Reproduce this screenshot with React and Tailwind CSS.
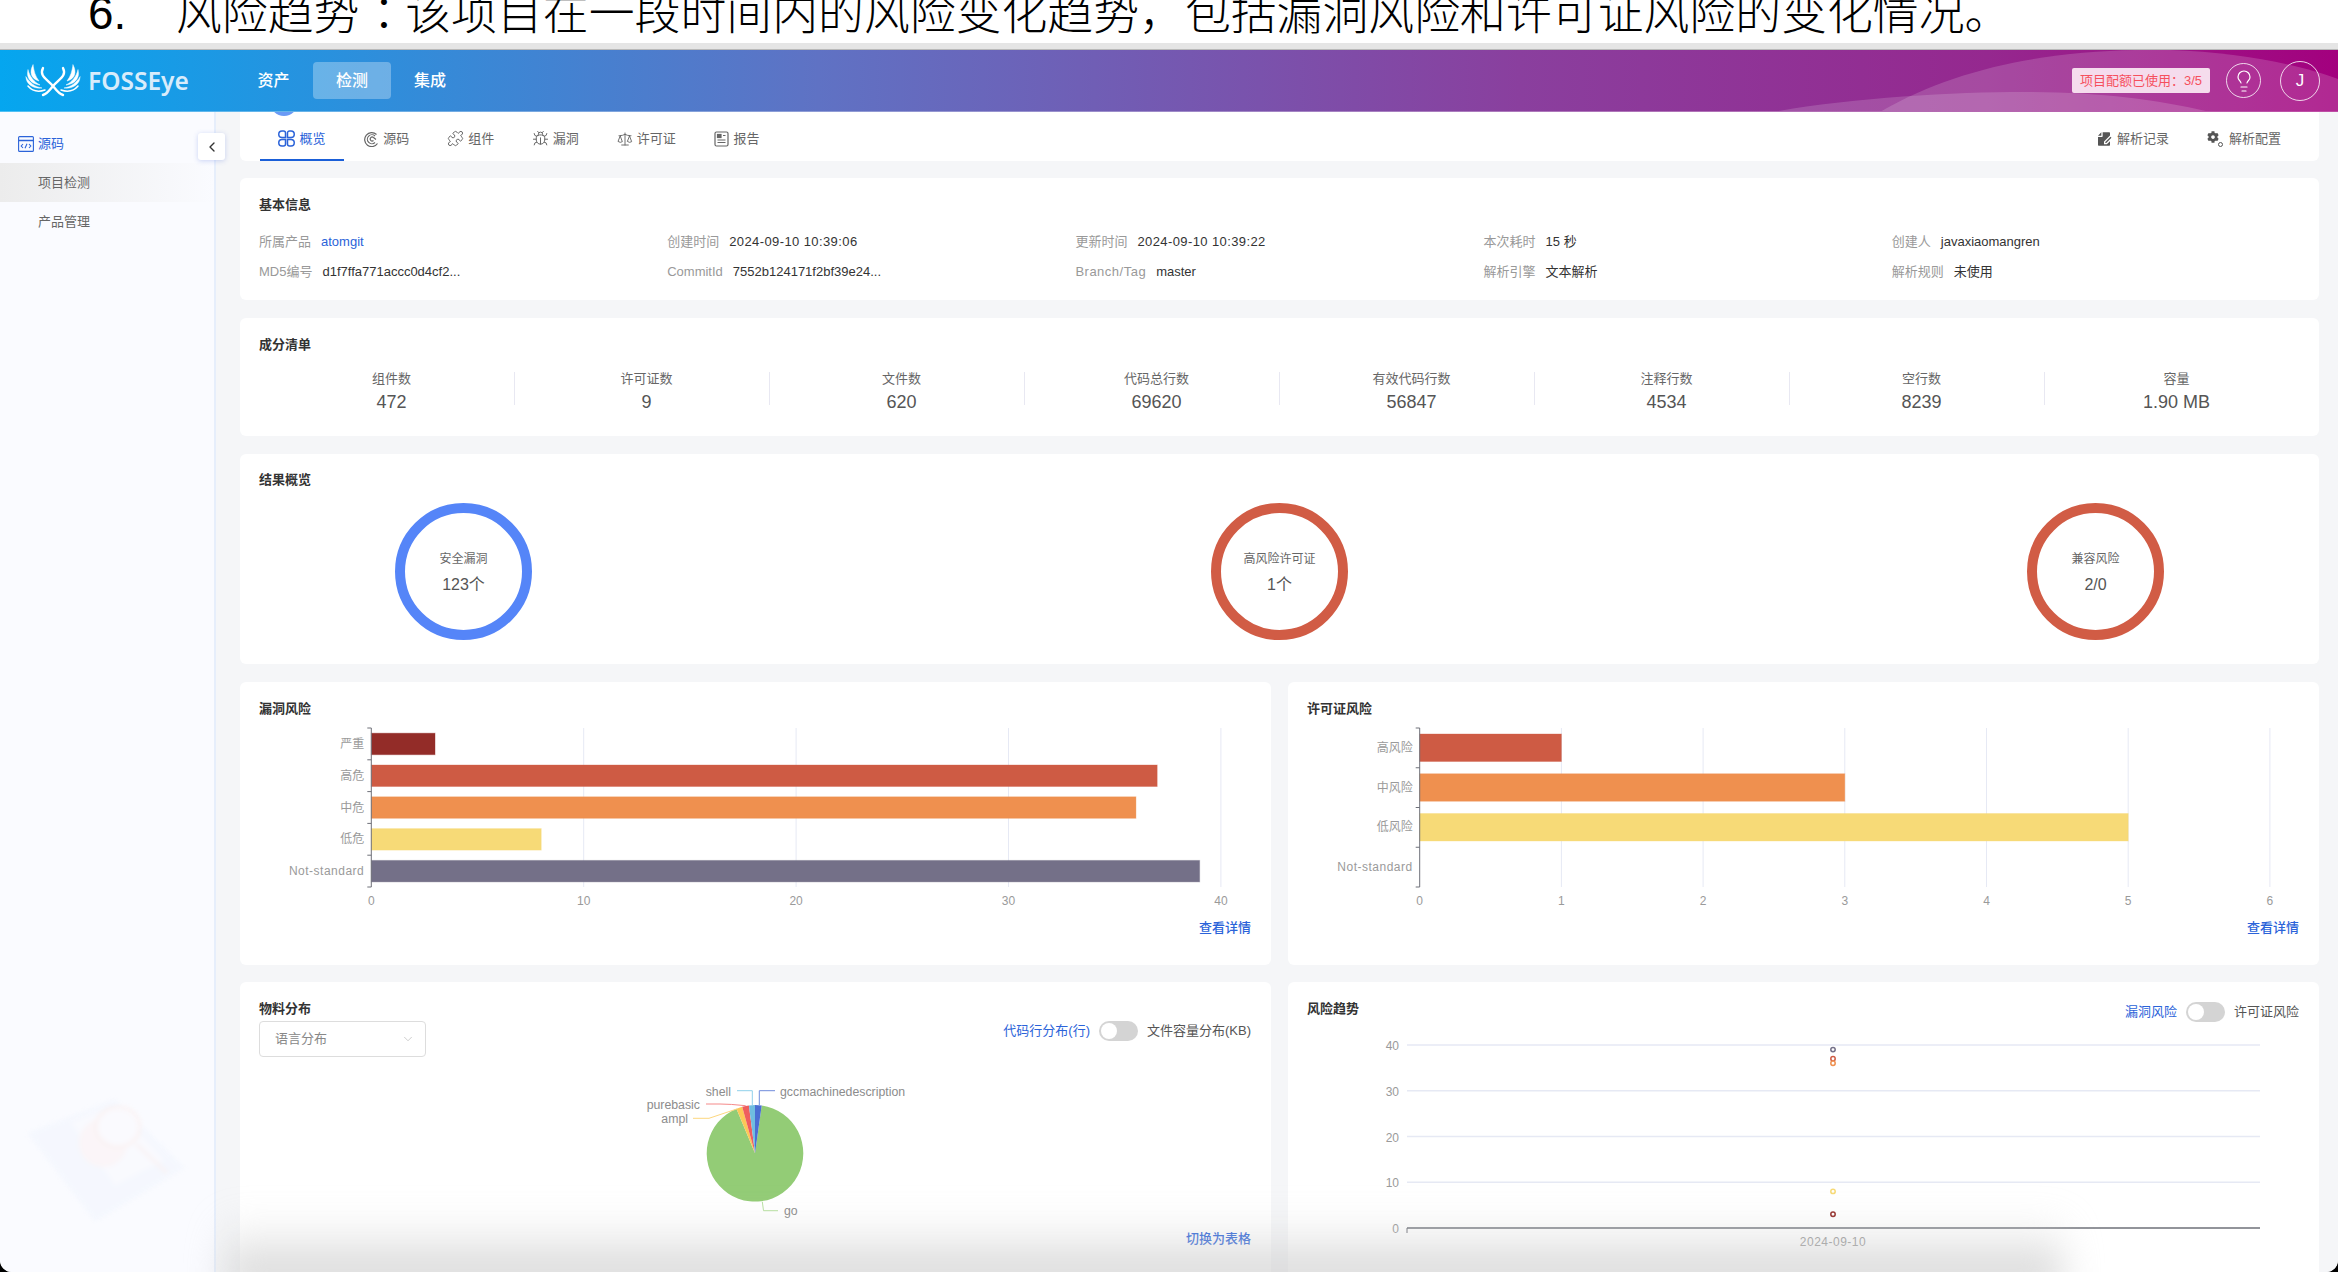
import React from "react";
import { ChevronLeft, ChevronDown, Lightbulb, Puzzle, Bug, Scale } from "lucide-react";
import { RiFileEditFill } from "react-icons/ri";
import { FaCog } from "react-icons/fa";

const BLUE = "#2b63d9";
const AXIS = "#6e7079";
const GRID = "#e6e9f4";
const LABEL = "#9a9a9a";

function OverviewIcon() {
  return (
    <svg width="17" height="17" viewBox="0 0 17 17" fill="none" stroke="currentColor" strokeWidth="1.5">
      <path d="M4 1h1.5a2 2 0 0 1 2 2v4.5H4a3 3 0 0 1 0-6.5zM13 1h-1.5a2 2 0 0 0-2 2v4.5H13a3 3 0 0 0 0-6.5zM4 16h1.5a2 2 0 0 0 2-2V9.500H4a3 3 0 0 0 0 6.500zM13 16h-1.500a2 2 0 0 1-2-2V9.500H13a3 3 0 0 1 0 6.500z" />
    </svg>
  );
}

function SourceIcon() {
  return (
    <svg width="16" height="16" viewBox="0 0 16 16" fill="none" stroke="currentColor" strokeWidth="1.2">
      <path d="M14.500 12.500A7 7 0 1 1 13.500 3.500" />
      <path d="M12 11.500A4.500 4.500 0 1 1 12 5" />
      <path d="M10.500 9.500A2 2 0 1 1 10.500 6.500L13 8.500" />
    </svg>
  );
}

function ReportIcon() {
  return (
    <svg width="15" height="16" viewBox="0 0 15 16" fill="none" stroke="currentColor" strokeWidth="1.2">
      <rect x="1" y="1" width="13" height="14" rx="1.500" />
      <rect x="3.500" y="3.500" width="3.500" height="3" fill="currentColor" />
      <path d="M3.500 9h8M3.500 11.500h8M9 4.500h2.500" />
    </svg>
  );
}

function SourceMenuIcon() {
  return (
    <svg width="16" height="16" viewBox="0 0 16 16" fill="none" stroke={BLUE} strokeWidth="1.100">
      <rect x="0.600" y="0.600" width="14.800" height="14.800" rx="1" />
      <path d="M0.600 4.500h14.800" strokeWidth="1.500" />
      <path d="M5 8 3.200 10 5 12M11 8l1.800 2L11 12M9 7.800 7 12.200" />
    </svg>
  );
}

function Logo() {
  return (
    <svg width="56" height="33" viewBox="0 0 56 33" fill="none" stroke="#fff" strokeLinecap="round">
      <path d="M8 1C4 8 6 15 14 17C10 12 9 7 8 1Z" fill="#fff" strokeWidth="0.500" />
      <path d="M3 6C1 13 5 20 15 21C9 18 5 13 3 6Z" fill="#fff" strokeWidth="0.500" />
      <path d="M1 13C1 20 8 25 17 24C10 23 5 19 1 13Z" fill="#fff" strokeWidth="0.500" />
      <path d="M3 22C8 28 14 28 20 26" strokeWidth="1.500" />
      <path d="M48 1C52 8 50 15 42 17C46 12 47 7 48 1Z" fill="#fff" strokeWidth="0.500" />
      <path d="M53 6C55 13 51 20 41 21C47 18 51 13 53 6Z" fill="#fff" strokeWidth="0.500" />
      <path d="M55 13C55 20 48 25 39 24C46 23 51 19 55 13Z" fill="#fff" strokeWidth="0.500" />
      <path d="M53 22C48 28 42 28 36 26" strokeWidth="1.500" />
      <path d="M18 4C14 12 22 15 28 22C32 27 34 30 38 31" strokeWidth="2.400" />
      <path d="M38 4C42 12 34 15 28 22C24 27 22 30 18 31" strokeWidth="2.400" />
    </svg>
  );
}

function Toggle() {
  return (
    <div className="flex h-[20px] w-[39px] items-center rounded-full bg-[#d4d4d4] px-[2px]">
      <div className="h-[16px] w-[16px] rounded-full bg-white" />
    </div>
  );
}

function CardTitle({ children }) {
  return <div className="text-[13px] leading-[18px] font-bold text-[#333]">{children}</div>;
}

function Info({ label, value, link, wide, wideLabel }) {
  return (
    <div className="flex gap-[10px] text-[13px] leading-[20px]">
      <span className={wideLabel ? "tracking-[0.5px] text-[#999]" : "text-[#999]"}>{label}</span>
      <span className={(link ? "text-[#2b63d9]" : "text-[#333]") + (wide ? " tracking-[0.4px]" : "")}>{value}</span>
    </div>
  );
}

function Ring({ color, label, value }) {
  return (
    <div
      className={
        "flex h-[137px] w-[137px] flex-col items-center justify-center rounded-full border-[10px] pt-[2px] " + color
      }
    >
      <div className="text-[12px] leading-[18px] text-[#666]">{label}</div>
      <div className="mt-[7px] text-[16px] leading-[20px] text-[#555]">{value}</div>
    </div>
  );
}

const tabs = [
  { label: "概览", icon: <OverviewIcon />, w: "w-[84px]", active: true },
  { label: "源码", icon: <SourceIcon />, w: "w-[84.500px]" },
  { label: "组件", icon: <Puzzle size={17} strokeWidth={1.4} />, w: "w-[84.500px]" },
  { label: "漏洞", icon: <Bug size={17} strokeWidth={1.4} />, w: "w-[84.500px]" },
  { label: "许可证", icon: <Scale size={16} strokeWidth={1.4} />, w: "w-[97.500px]" },
  { label: "报告", icon: <ReportIcon />, w: "w-[84px]" },
];

const stats = [
  ["组件数", "472"],
  ["许可证数", "9"],
  ["文件数", "620"],
  ["代码总行数", "69620"],
  ["有效代码行数", "56847"],
  ["注释行数", "4534"],
  ["空行数", "8239"],
  ["容量", "1.90 MB"],
];

function BarChart({ x0, unit, ticks, top, bottom, labels, bars, barH, offset }) {
  const band = (bottom - top) / labels.length;
  return (
    <>
      {ticks.map((t) => (
        <g key={t}>
          {t > 0 && <line x1={x0 + t * unit} x2={x0 + t * unit} y1={top} y2={bottom} stroke={GRID} />}
          <text x={x0 + t * unit} y={bottom + 18} textAnchor="middle" fontSize="12" fill={LABEL}>
            {t}
          </text>
        </g>
      ))}
      {labels.map((l, i) => (
        <text
          key={l}
          x={x0 - 7}
          y={top + band * i + band / 2 + 4}
          textAnchor="end"
          fontSize="12"
          fill={LABEL}
          className={l === "Not-standard" ? "tracking-[0.5px]" : ""}
        >
          {l}
        </text>
      ))}
      {bars.map((b, i) => (
        <rect
          key={i}
          x={x0}
          y={top + band * i + offset}
          width={b.value * unit}
          height={barH}
          fill={b.color}
          stroke={b.color}
          strokeOpacity="0.35"
        />
      ))}
      <line x1={x0} x2={x0} y1={top} y2={bottom} stroke={AXIS} />
      {Array.from({ length: labels.length + 1 }, (_, i) => (
        <line key={i} x1={x0 - 4} x2={x0} y1={top + band * i} y2={top + band * i} stroke={AXIS} />
      ))}
    </>
  );
}

const pieCx = 755;
const pieCy = 1153.300;
const pieR = 48.300;

function wedge(from, to) {
  const pt = (a) => {
    const r = (a * Math.PI) / 180;
    return `${pieCx + pieR * Math.sin(r)} ${pieCy - pieR * Math.cos(r)}`;
  };
  const large = to - from > 180 ? 1 : 0;
  return `M${pieCx} ${pieCy}L${pt(from)}A${pieR} ${pieR} 0 ${large} 1 ${pt(to)}Z`;
}

const pieSlices = [
  { from: 8, to: 337.400, color: "#93cc76" },
  { from: 337.400, to: 344.600, color: "#fcc858" },
  { from: 344.600, to: 352.800, color: "#ef5e5e" },
  { from: 352.800, to: 360, color: "#6fbde0" },
  { from: 0, to: 8, color: "#4a6ed3" },
];

function PieChart() {
  return (
    <svg className="block" width="1031" height="166" viewBox="240 1062 1031 166">
      {pieSlices.map((s) => (
        <path key={s.color} d={wedge(s.from, s.to)} fill={s.color} />
      ))}
      <g fill="none" strokeWidth="1">
        <path d="M759.300 1105V1090.700H775" stroke="#6f8cdc" />
        <path d="M752.300 1105V1090.700H737" stroke="#8fd0ea" />
        <path d="M745.700 1105.700Q730 1104 720 1104H706" stroke="#f58a8a" />
        <path d="M736.700 1109L709 1118.300H693" stroke="#fdd77f" />
        <path d="M762.300 1201.700L763.500 1210.700H778" stroke="#b7e09f" />
      </g>
      <g fontSize="12.300" fill="#8c8c8c">
        <text x="780" y="1095.500">gccmachinedescription</text>
        <text x="731" y="1095.500" textAnchor="end">shell</text>
        <text x="700" y="1108.500" textAnchor="end">purebasic</text>
        <text x="688" y="1122.500" textAnchor="end">ampl</text>
        <text x="784" y="1215">go</text>
      </g>
    </svg>
  );
}

const trendPoints = [
  { v: 39, color: "#747088" },
  { v: 37, color: "#ce5b44" },
  { v: 36, color: "#ef904f" },
  { v: 8, color: "#f7da77" },
  { v: 3, color: "#932c28" },
];

function TrendChart() {
  const y = (v) => 1228 - v * 4.575;
  return (
    <svg className="block" width="1031" height="225" viewBox="1288 1030 1031 225">
      {[40, 30, 20, 10].map((v) => (
        <line key={v} x1="1407" x2="2260" y1={y(v)} y2={y(v)} stroke={GRID} strokeWidth="1.500" />
      ))}
      {[40, 30, 20, 10, 0].map((v) => (
        <text key={v} x="1399" y={y(v) + 5} textAnchor="end" fontSize="12" fill={LABEL}>
          {v}
        </text>
      ))}
      <line x1="1407" x2="2260" y1="1228" y2="1228" stroke={AXIS} strokeWidth="1.500" />
      <line x1="1407" x2="1407" y1="1228" y2="1233" stroke={AXIS} />
      <text x="1833" y="1246" textAnchor="middle" fontSize="12" fill={LABEL} className="tracking-[0.5px]">
        2024-09-10
      </text>
      {trendPoints.map((p) => (
        <circle key={p.v} cx="1833" cy={y(p.v)} r="2.200" fill="#fff" stroke={p.color} strokeWidth="1.500" />
      ))}
    </svg>
  );
}

function Illustration() {
  return (
    <svg
      className="absolute bottom-[50px] left-0 opacity-40 blur-[2px]"
      width="216"
      height="140"
      viewBox="0 1082 216 140"
    >
      <polygon points="27,1133 115,1099 185,1168 95,1222" fill="#eef3fd" />
      <polygon points="70,1122 115,1105 165,1160 115,1186" fill="#f8f9fe" />
      <circle cx="103" cy="1143" r="24" fill="#fdeeee" />
      <ellipse cx="118" cy="1127" rx="22" ry="20" fill="#fbf9fd" stroke="#fbe6e2" strokeWidth="3" />
      <line x1="136" y1="1144" x2="167" y2="1173" stroke="#fbe6e2" strokeWidth="2.500" />
    </svg>
  );
}

export default function App() {
  return (
    <div className="h-[1272px] w-[2338px] overflow-hidden bg-black font-['Liberation_Sans','Noto_Sans_CJK_SC',sans-serif]">
      <div className="relative flex h-full flex-col overflow-hidden rounded-b-[12px] bg-white">
        {/* slide text cut off by the top of the capture */}
        <div className="h-[43px] shrink-0 overflow-hidden bg-white">
          <div className="-mt-[9px] flex whitespace-nowrap pl-[88px] text-[45.860px] leading-[45px] font-light text-black">
            <span className="w-[88px]">6.</span>
            <span>
              风险趋势<span className="inline-block translate-x-[13px] -translate-y-[2px]">：</span>
              该项目在一段时间内的风险变化趋势，包括漏洞风险和许可证风险的变化情况。
            </span>
          </div>
        </div>
        <div className="h-[7px] shrink-0 border-b border-[#b9b9b9] bg-[#e5e5e5]" />

        <header className="relative flex h-[62px] shrink-0 items-center overflow-hidden border-b border-white/30 bg-[linear-gradient(90deg,#05a6ef_0%,#5f72c4_35%,#8a3f9e_65%,#95288f_85%,#a3007e_100%)] pl-[25px] pr-[18px] text-white">
          <svg className="absolute inset-0" width="2338" height="62" viewBox="0 0 2338 62">
            <path d="M1880 62C1960 15 2060 -2 2170 0C2240 2 2300 15 2338 29V62Z" fill="#fff" fillOpacity="0.16" />
            <path d="M1773 62C1850 48 1950 42 2025 42C2100 42 2160 50 2210 62Z" fill="#fff" fillOpacity="0.16" />
          </svg>
          <div className="relative flex w-[165px] items-center">
            <Logo />
            <span className="ml-[7px] font-['Noto_Sans'] text-[24.500px] leading-[30px] font-semibold text-[#d8ecfb]">
              FOSSEye
            </span>
          </div>
          <nav className="relative ml-[56px] flex items-center text-[16px] font-medium">
            <span className="w-[55px] text-center">资产</span>
            <span className="ml-[12px] flex h-[37px] w-[78px] items-center justify-center rounded-[4px] bg-white/30">
              检测
            </span>
            <span className="w-[78px] text-center">集成</span>
          </nav>
          <div className="relative ml-auto flex items-center">
            <div className="flex h-[25px] w-[138px] items-center justify-center rounded-[2px] bg-[#f5dced] text-[13px] text-[#f5505e]">
              项目配额已使用：3/5
            </div>
            <div className="ml-[16px] flex h-[35px] w-[35px] items-center justify-center rounded-full border border-white/80">
              <Lightbulb size={24} strokeWidth={1.2} />
            </div>
            <div className="ml-[19px] flex h-[40px] w-[40px] items-center justify-center rounded-full border border-white/80 text-[17px]">
              J
            </div>
          </div>
        </header>

        <div className="flex min-h-0 flex-1">
          <aside className="relative w-[216px] shrink-0 border-r-2 border-[#e6eefb] bg-[#fafbff] pt-[13px] text-[13px]">
            <div className="flex h-[38px] items-center gap-[4px] pl-[18px] text-[#2b63d9]">
              <SourceMenuIcon />
              源码
            </div>
            <div className="flex h-[39px] items-center bg-[linear-gradient(90deg,#ececec,#fafbff)] pl-[38px] text-[#666]">
              项目检测
            </div>
            <div className="flex h-[39px] items-center pl-[38px] text-[#666]">产品管理</div>
            <button className="absolute top-[21px] right-[-11px] z-10 flex h-[27px] w-[27px] items-center justify-center rounded-[3px] bg-white text-[#333] shadow-[0_1px_5px_rgba(90,120,220,0.3)]">
              <ChevronLeft size={16} strokeWidth={2} />
            </button>
            <Illustration />
          </aside>

          <main className="flex min-w-0 flex-1 flex-col gap-[18px] overflow-hidden bg-[#f5f6f8] pl-[24px] pr-[19px]">
            <div className="relative -mb-px flex h-[49px] shrink-0 items-stretch rounded-b-[6px] bg-white pl-[20px] pr-[38px] pt-[6px] text-[13px]">
              <div className="absolute top-[-24px] left-[30px] h-[28px] w-[28px] rounded-full bg-[#6a9af5]" />
              {tabs.map((t) => (
                <div
                  key={t.label}
                  className={
                    "flex items-center justify-center gap-[4px] border-b-2 " +
                    t.w +
                    (t.active ? " border-[#1a5fd8] text-[#2b63d9]" : " border-transparent text-[#666]")
                  }
                >
                  {t.icon}
                  {t.label}
                </div>
              ))}
              <div className="ml-auto flex items-center pb-[2px] text-[#666]">
                <RiFileEditFill size={16} className="text-[#555]" />
                <span className="ml-[5px]">解析记录</span>
                <span className="relative ml-[38px] flex h-[16px] w-[16px] items-start text-[#555]">
                  <FaCog size={12} />
                  <span className="absolute right-0 bottom-0 h-[5px] w-[5px] rounded-full border border-[#555]" />
                </span>
                <span className="ml-[6px]">解析配置</span>
              </div>
            </div>

            <section className="h-[122px] shrink-0 rounded-[6px] bg-white px-[19px] pt-[18px]">
              <CardTitle>基本信息</CardTitle>
              <div className="mt-[18px] grid grid-cols-5 gap-y-[10px]">
                <Info label="所属产品" value="atomgit" link />
                <Info label="创建时间" value="2024-09-10 10:39:06" wide />
                <Info label="更新时间" value="2024-09-10 10:39:22" wide />
                <Info label="本次耗时" value="15 秒" />
                <Info label="创建人" value="javaxiaomangren" />
                <Info label="MD5编号" value="d1f7ffa771accc0d4cf2..." />
                <Info label="CommitId" value="7552b124171f2bf39e24..." />
                <Info label="Branch/Tag" value="master" wideLabel />
                <Info label="解析引擎" value="文本解析" />
                <Info label="解析规则" value="未使用" />
              </div>
            </section>

            <section className="h-[118px] shrink-0 rounded-[6px] bg-white px-[19px] pt-[18px]">
              <CardTitle>成分清单</CardTitle>
              <div className="mt-[15px] flex pl-[1px]">
                {stats.map(([label, value], i) => (
                  <div key={label} className="flex w-[255px] items-start">
                    <div className="flex-1 pl-[9px] text-center">
                      <div className="text-[13px] leading-[20px] text-[#666]">{label}</div>
                      <div className="mt-[1px] text-[18px] leading-[24px] text-[#555]">{value}</div>
                    </div>
                    <div className={i < 7 ? "mt-[3px] h-[33px] w-px bg-[#e8e8f2]" : "mt-[3px] h-[33px] w-px"} />
                  </div>
                ))}
              </div>
            </section>

            <section className="h-[210px] shrink-0 rounded-[6px] bg-white px-[19px] pt-[17px]">
              <CardTitle>结果概览</CardTitle>
              <div className="mt-[14px] flex justify-between px-[136px]">
                <Ring color="border-[#5585f8]" label="安全漏洞" value="123个" />
                <Ring color="border-[#d15c45]" label="高风险许可证" value="1个" />
                <Ring color="border-[#d15c45]" label="兼容风险" value="2/0" />
              </div>
            </section>

            <div className="-mb-px grid h-[283px] shrink-0 grid-cols-2 gap-[17px]">
              <section className="rounded-[6px] bg-white pt-[18px]">
                <div className="px-[19px]">
                  <CardTitle>漏洞风险</CardTitle>
                </div>
                <svg className="block" width="1031" height="192" viewBox="240 718 1031 192">
                  <BarChart
                    x0={371.300}
                    unit={21.240}
                    ticks={[0, 10, 20, 30, 40]}
                    top={728}
                    bottom={887}
                    labels={["严重", "高危", "中危", "低危", "Not-standard"]}
                    bars={[
                      { value: 3, color: "#932c28" },
                      { value: 37, color: "#ce5b44" },
                      { value: 36, color: "#ef904f" },
                      { value: 8, color: "#f7da77" },
                      { value: 39, color: "#747088" },
                    ]}
                    barH={21.500}
                    offset={5.200}
                  />
                </svg>
                <div className="mt-[7px] pr-[20px] text-right text-[13px] leading-[22px] font-medium text-[#2b63d9]">
                  查看详情
                </div>
              </section>
              <section className="rounded-[6px] bg-white pt-[18px]">
                <div className="px-[19px]">
                  <CardTitle>许可证风险</CardTitle>
                </div>
                <svg className="block" width="1031" height="192" viewBox="1288 718 1031 192">
                  <BarChart
                    x0={1419.700}
                    unit={141.700}
                    ticks={[0, 1, 2, 3, 4, 5, 6]}
                    top={728}
                    bottom={887}
                    labels={["高风险", "中风险", "低风险", "Not-standard"]}
                    bars={[
                      { value: 1, color: "#ce5b44" },
                      { value: 3, color: "#ef904f" },
                      { value: 5, color: "#f7da77" },
                    ]}
                    barH={27.500}
                    offset={6}
                  />
                </svg>
                <div className="mt-[7px] pr-[20px] text-right text-[13px] leading-[22px] font-medium text-[#2b63d9]">
                  查看详情
                </div>
              </section>
            </div>

            <div className="grid min-h-0 flex-1 grid-cols-2 gap-[17px]">
              <section className="rounded-t-[6px] bg-white pt-[18px]">
                <div className="flex justify-between px-[19px]">
                  <div>
                    <CardTitle>物料分布</CardTitle>
                    <div className="mt-[3px] flex h-[36px] w-[167px] items-center justify-between rounded-[4px] border border-[#ddd] pl-[15px] pr-[10px] text-[13px] text-[#888]">
                      语言分布
                      <ChevronDown size={14} strokeWidth={1} className="text-[#aaa]" />
                    </div>
                  </div>
                  <div className="mt-[21px] flex h-[20px] items-center gap-[9px] pr-[1px] text-[13px]">
                    <span className="text-[#2b63d9]">代码行分布(行)</span>
                    <Toggle />
                    <span className="text-[#555]">文件容量分布(KB)</span>
                  </div>
                </div>
                <div className="mt-[5px]">
                  <PieChart />
                </div>
                <div className="pr-[20px] text-right text-[13px] leading-[22px] font-medium text-[#2b63d9]">
                  切换为表格
                </div>
              </section>
              <section className="rounded-t-[6px] bg-white pt-[18px]">
                <div className="flex items-start justify-between px-[19px]">
                  <CardTitle>风险趋势</CardTitle>
                  <div className="mt-[2px] flex h-[20px] items-center gap-[9px] pr-[1px] text-[13px]">
                    <span className="text-[#2b63d9]">漏洞风险</span>
                    <Toggle />
                    <span className="text-[#555]">许可证风险</span>
                  </div>
                </div>
                <div className="mt-[8px]">
                  <TrendChart />
                </div>
              </section>
            </div>
          </main>
        </div>

        {/* shadow of the window laid over the bottom of the capture */}
        <div className="pointer-events-none absolute right-[275px] bottom-[-20px] left-[225px] h-[75px] bg-[linear-gradient(0deg,#cfcfcf,rgba(220,220,220,0))] blur-[18px]" />
      </div>
    </div>
  );
}
